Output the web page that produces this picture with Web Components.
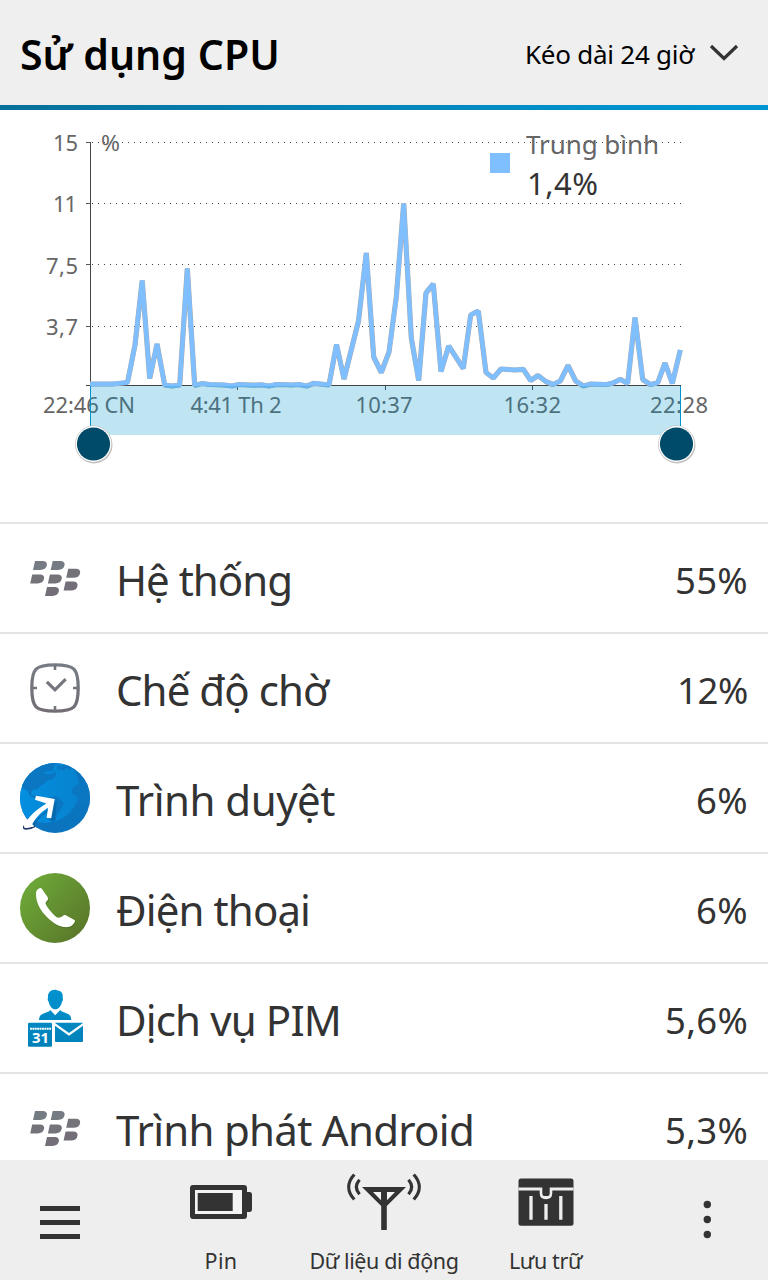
<!DOCTYPE html>
<html lang="vi">
<head>
<meta charset="utf-8">
<title>Sử dụng CPU</title>
<style>
    body {
        margin: 0;
        background: #fff;
        font-family: "Noto Sans", "Open Sans", sans-serif;
        color: #333;
    }
</style>
</head>
<body>
<cpu-app>
    <cpu-header slot="header" heading="Sử dụng CPU" heading-width="260">
        <fit-text width="169">Kéo dài 24 giờ</fit-text>
    </cpu-header>
    <cpu-chart slot="chart"></cpu-chart>
    <usage-row icon="berry" value="55%" value-width="73"><fit-text width="176">Hệ thống</fit-text></usage-row>
    <usage-row icon="clock" value="12%" value-width="71"><fit-text width="212">Chế độ chờ</fit-text></usage-row>
    <usage-row icon="globe" value="6%" value-width="52"><fit-text width="219">Trình duyệt</fit-text></usage-row>
    <usage-row icon="phone" value="6%" value-width="52"><fit-text width="194">Điện thoại</fit-text></usage-row>
    <usage-row icon="pim" value="5,6%" value-width="83"><fit-text width="225">Dịch vụ PIM</fit-text></usage-row>
    <usage-row icon="berry" value="5,3%" value-width="83"><fit-text width="358">Trình phát Android</fit-text></usage-row>
    <action-bar slot="bar">
        <action-tab icon="battery"><fit-text width="33">Pin</fit-text></action-tab>
        <action-tab icon="antenna"><fit-text width="149">Dữ liệu di động</fit-text></action-tab>
        <action-tab icon="chest"><fit-text width="73">Lưu trữ</fit-text></action-tab>
    </action-bar>
</cpu-app>

<script>
const BERRIES = [[13, 18], [30.7, 18], [10.2, 31.4], [27.9, 31.4], [46.2, 25.8], [43.6, 38.6], [25, 44]];
const HANDSET = 'M19.500 15.200C16.800 16.500 16 18 16 21c0 8 3.600 15 9 21s11.500 10.700 18.300 12c4 .4 7.200-.1 9.200-2l2.200-2.800c.6-1 .3-1.900-.7-2.500l-7.800-4.300c-1.400-.7-2.300-.4-3.500.6-1.800 1.300-4.300 2.200-6 1.200-4-3-9-9-11-13.200-.6-1.500.8-2.500 1.600-3.500.9-1.200.9-2.200.3-3.500L22 16c-.6-1-1.500-1.300-2.500-.8z';

const ICONS = {
    berry: `
    <svg width="70" height="70" viewBox="0 0 70 70">
        ${BERRIES.map(([x, y]) => `
        <path transform="translate(${x} ${y})" fill="${y < 25 ? '#757b82' : y < 35 ? '#747379' : '#736e77'}"
            d="M2 0h7.200c3.200 0 5.200 1.500 4.700 4.100C13.300 7.400 10.900 9 7.400 9H0z"/>`).join('')}
    </svg>`,
    clock: `
    <svg width="70" height="70" viewBox="0 0 70 70" fill="none" stroke="url(#g)" stroke-width="3.300">
        <defs>
            <linearGradient id="g" gradientUnits="userSpaceOnUse" x1="0" y1="10" x2="0" y2="60">
                <stop offset="0" stop-color="#757d84"/><stop offset="1" stop-color="#736c75"/>
            </linearGradient>
        </defs>
        <path d="M35 11.900C54.500 11.900 58.200 15.500 58.200 35S54.500 58.100 35 58.100 11.800 54.500 11.800 35 15.500 11.900 35 11.900z"/>
        <path d="M35 12v5M35 53v5M12 35h5M53 35h5" stroke="#74747b" stroke-width="2.600"/>
        <path d="M26.800 28.800L35 36.800 45.700 26.200" stroke-width="3.200"/>
    </svg>`,
    globe: `
    <svg width="70" height="70" viewBox="0 0 70 70">
        <defs>
            <linearGradient id="sea" x1="0" y1=".5" x2="1" y2=".5">
                <stop offset="0" stop-color="#0391e3"/><stop offset="1" stop-color="#0783ce"/>
            </linearGradient>
            <clipPath id="c"><circle cx="35" cy="35" r="35"/></clipPath>
        </defs>
        <g clip-path="url(#c)">
            <rect width="70" height="70" fill="#0b74be"/>
            <circle cx="25" cy="25.500" r="34.500" fill="url(#sea)"/>
            <g fill="#0b76c1">
                <path d="M4 12C12 3 22-1 35-1h1l-2 5-1 4-3 0-6 1 1 2 7 0 3-3 1 4-3 4-5 1-4 4-4 2-2 3-6 1-1 5 5 1 3-1 1 3 5 1-2 2-6-2-7-3-3-6-4-1-2-5z"/>
                <path d="M37 3l2-1 2 2 3-3 7 3-1 4-3-3-4 3-3-2-2 2z"/>
                <path d="M30 34l6-1 5 4 3 3-3 6-4 6-2 6-4 1-1-8-2-5z"/>
                <path d="M70 20l-11 0-2 2-4 2-1 5 3 4 2 0 2 5 11 4z"/>
            </g>
            <path d="M37 38l-2 20-6-1 1-9C22 51 17 58 13 65l-4-2z" fill="#0467aa" opacity=".8"/>
        </g>
        <path d="M4.500 62.500c-1.500 2.500-.8 3.500 1.600 3.300 3.500-.2 6.500-1.200 9-2.600" fill="none" stroke="#23376b" stroke-width="1.700"/>
        <path d="M3.500 62.500C8 54.500 16.500 46 26.500 40.500L15 36.700l1-4L34.700 36 31.200 55.300l-4.600-.5 1.500-10C20.500 49 15.500 55.500 12.200 61.200l2 2.200L5 65z" fill="#fff"/>
    </svg>`,
    phone: `
    <svg width="70" height="70" viewBox="0 0 70 70">
        <defs>
            <linearGradient id="g" x1=".1" y1=".2" x2=".85" y2=".85">
                <stop offset="0" stop-color="#6ca637"/><stop offset="1" stop-color="#5b7a2b"/>
            </linearGradient>
        </defs>
        <circle cx="35" cy="35" r="35" fill="url(#g)"/>
        <path transform="translate(.8 1.200)" fill="#456a20" opacity=".6" d="${HANDSET}"/>
        <path fill="#fff" d="${HANDSET}"/>
    </svg>`,
    pim: `
    <svg width="70" height="70" viewBox="0 0 70 70">
        <defs>
            <linearGradient id="g" gradientUnits="userSpaceOnUse" x1="0" y1="7" x2="0" y2="64">
                <stop offset="0" stop-color="#0092cf"/><stop offset="1" stop-color="#0381b8"/>
            </linearGradient>
        </defs>
        <g fill="url(#g)">
            <path d="M28 15c-.6-5 2.400-8.200 7-8.200 1.300 0 1.700.5 2.700.6 3.700.3 5.600 3 5 7.600.7 1.500.2 2.900-.7 3.700-.7 3.900-3.400 7.600-6.700 7.600s-6-3.700-6.600-7.600c-.9-.8-1.400-2.200-.7-3.700z"/>
            <path d="M19 37c.3-4 1.500-5.200 4-6.200l6.200-2.600 1-1.200 5 5.200 5-5.200 1.200 1.200 6.100 2.600c2.500 1 3.500 2.200 3.800 6.200z"/>
            <rect x="8" y="39.700" width="24" height="24" rx="1.300"/>
            <path d="M35 39.700h28v.3l-14 9.900-14-9.900z"/>
            <path d="M35 42.800l14 10 14-10V58a1 1 0 0 1-1 1H36a1 1 0 0 1-1-1z"/>
        </g>
        <path d="M10 45.700h21" stroke="#fff" stroke-width="2" stroke-dasharray="1.900 .5"/>
        <text x="12" y="60" font-size="14.500" font-weight="700" fill="#fff" textLength="17" lengthAdjust="spacingAndGlyphs">31</text>
    </svg>`,
    battery: `
    <svg width="76" height="60" viewBox="0 0 76 60">
        <rect x="7" y="15" width="57" height="34" rx="3" fill="#333"/>
        <rect x="12" y="20" width="47" height="24" fill="#f4f4f4"/>
        <rect x="14.700" y="23" width="35" height="18" fill="#333"/>
        <path d="M64 22h2.500q2.500 0 2.500 3v14q0 3-2.500 3H64z" fill="#333"/>
    </svg>`,
    antenna: `
    <svg width="76" height="60" viewBox="0 0 76 60" fill="none" stroke="#333">
        <path d="M16 17h44L40.800 36v24h-5.600V36z" fill="#333" stroke="none"/>
        <path d="M27 22h8v8.200zM41 22h8l-8 8.200z" fill="#f4f4f4" stroke="none"/>
        <path d="M8.300 4.500C.9 12.500.9 21.500 8.300 29.500M13.500 9.700c-4 4.600-4 10 0 14.600M67.700 4.500c7.400 8 7.400 17 0 25M62.500 9.700c4 4.600 4 10 0 14.600" stroke-width="3.200"/>
    </svg>`,
    chest: `
    <svg width="76" height="60" viewBox="0 0 76 60">
        <rect x="10.500" y="8.500" width="55" height="47.300" rx="2.500" fill="#333"/>
        <path d="M10.500 19h55" stroke="#eee" stroke-width="2.800"/>
        <path d="M31.700 18.500v4.500q0 6.200 6.300 6.200t6.300-6.200v-4.500z" fill="#eee"/>
        <path d="M34.300 17v6.500q0 2.500 2 2.500h3.400q2 0 2-2.500V17z" fill="#333"/>
        <path d="M23 26v23.700M38 34v15.700M52.800 26v23.700" stroke="#eee" stroke-width="3.300"/>
    </svg>`
};

// Spreads its text over a fixed advance width
class FitText extends HTMLElement {
    constructor() {
        super();
        this.attachShadow({ mode: 'open' });
        this.shadowRoot.innerHTML = `
        <style>
            :host { display: inline-block; white-space: nowrap; }
        </style>
        <slot></slot>
        `;
    }

    fit() {
        this.style.letterSpacing = '0';
        const natural = this.getBoundingClientRect().width;
        const gap = (Number(this.getAttribute('width')) - natural) / this.textContent.length;
        this.style.letterSpacing = gap.toFixed(3) + 'px';
    }
}
customElements.define('fit-text', FitText);

class CpuApp extends HTMLElement {
    constructor() {
        super();
        this.attachShadow({ mode: 'open' });
    }

    connectedCallback() {
        this.shadowRoot.innerHTML = `
        <style>
            :host {
                display: flex;
                flex-direction: column;
                width: 768px;
                height: 1280px;
                overflow: hidden;
            }
            .list {
                flex: 1;
                min-height: 0;
                overflow: hidden;
            }
        </style>
        <slot name="header"></slot>
        <slot name="chart"></slot>
        <div class="list"><slot></slot></div>
        <slot name="bar"></slot>
        `;
    }
}
customElements.define('cpu-app', CpuApp);

class CpuHeader extends HTMLElement {
    constructor() {
        super();
        this.attachShadow({ mode: 'open' });
    }

    connectedCallback() {
        this.shadowRoot.innerHTML = `
        <style>
            :host {
                display: block;
                flex: none;
                height: 110px;
                color: #000;
                background: #efefef;
            }
            .line {
                height: 105px;
                display: flex;
                align-items: center;
                justify-content: space-between;
                padding: 0 29px 0 20px;
                box-sizing: border-box;
            }
            h1 {
                margin: 3px 0 0;
                font-size: 41px;
                font-weight: 600;
            }
            .range {
                display: flex;
                align-items: center;
                gap: 15px;
                font-size: 26px;
                margin-top: 2px;
            }
            .range svg { margin-top: -2px; }
            .rule {
                height: 5px;
                background: linear-gradient(90deg, #08709a, #0092cc 80%, #0096d2);
            }
        </style>
        <div class="line">
            <h1><fit-text width="${this.getAttribute('heading-width')}">${this.getAttribute('heading')}</fit-text></h1>
            <div class="range">
                <slot></slot>
                <svg width="30" height="20" viewBox="0 0 30 20"><path d="M2 3l13 12.500L28 3" fill="none" stroke="#333" stroke-width="3.200"/></svg>
            </div>
        </div>
        <div class="rule"></div>
        `;
    }
}
customElements.define('cpu-header', CpuHeader);

class CpuChart extends HTMLElement {
    constructor() {
        super();
        this.attachShadow({ mode: 'open' });
    }

    connectedCallback() {
        const points = [
            [90, 384], [113, 384], [127.5, 382.5], [135, 345], [142.2, 280.5], [149.7, 378.5], [157, 344],
            [164.7, 385], [172, 386], [179.7, 385], [187.3, 268.5], [194.7, 385.5], [202, 383.5], [209.5, 384.5],
            [224, 385], [232, 386], [239, 384.5], [254, 385.2], [261.5, 384.8], [269, 386], [276.5, 384.5],
            [284, 384.6], [291.5, 385], [299, 384.5], [306.7, 386], [314, 383.3], [329, 385], [336.5, 344.5],
            [344, 379], [358.5, 321], [366.3, 253], [373.7, 357], [381.3, 372.5], [389, 352], [396.3, 297],
            [403.7, 203.5], [411.3, 338], [418.7, 380.5], [426, 293], [433.3, 284], [441, 371.5], [448.7, 346],
            [463.3, 368.5], [470.7, 315], [478.3, 311], [486, 372.5], [493.3, 378], [501, 369], [515, 370],
            [523.3, 369.3], [530.7, 380.5], [538, 375.5], [545.7, 381.5], [553, 384.5], [560.3, 381], [568, 365.5],
            [575.7, 381], [583.3, 386], [590.7, 384], [606.7, 384.5], [613, 383], [620.3, 379.3], [627.7, 383.5],
            [635, 317.5], [642.7, 379.5], [650.3, 384.5], [657.7, 382.8], [665, 363], [672.3, 383.5], [680.3, 350]
        ].map(p => p.join(',')).join(' ');

        const grid = [142.5, 203.5, 264.5, 326.5];
        const yLabels = [['15', 53, 151, 25], ['11', 53, 212, 24], ['7,5', 46, 274, 32], ['3,7', 46, 335, 32]];
        const xLabels = [['22:46 CN', 43, 92], ['4:41 Th 2', 190.5, 91], ['10:37', 355.5, 57], ['16:32', 503.5, 57.5], ['22:28', 650, 58]];

        this.shadowRoot.innerHTML = `
        <style>
            :host {
                display: block;
                flex: none;
                height: 412px;
            }
            svg { display: block; }
            text { font-size: 22px; fill: #666; }
        </style>
        <svg width="768" height="412" viewBox="0 110 768 412">
            ${grid.map(y => `<path d="M92 ${y}H682" stroke="#444" stroke-dasharray="1 5"/><path d="M86 ${y}h4" stroke="#555"/>`).join('')}
            <path d="M90.500 142v244M86 385.500h595M237.500 386v4M385.500 386v4M532.500 386v4" stroke="#444" fill="none"/>
            ${yLabels.map(([t, x, y, w]) => `<text x="${x}" y="${y}" textLength="${w}">${t}</text>`).join('')}
            <text x="101" y="151" textLength="19" lengthAdjust="spacingAndGlyphs">%</text>
            ${xLabels.map(([t, x, w]) => `<text x="${x}" y="413" textLength="${w}">${t}</text>`).join('')}

            <rect x="490" y="153" width="20" height="20" fill="#80bfff"/>
            <text x="526" y="154" style="font-size: 26px" textLength="133">Trung bình</text>
            <text x="527" y="195" style="font-size: 31px; fill: #333" textLength="71">1,4%</text>

            <g fill="none" stroke-linejoin="bevel">
                <polyline points="${points}" stroke="#aaa" stroke-width="5.200"/>
                <polyline points="${points}" stroke="#80bfff" stroke-width="4.400"/>
            </g>

            <rect x="90" y="386" width="591" height="49" fill="#0092cc" opacity=".25"/>
            <path d="M90.500 386v42M680.500 386v42" stroke="#0092cc"/>
            ${[93.5, 676.5].map(x => `
            <circle cx="${x + .5}" cy="445" r="18.500" fill="#888" opacity=".5"/>
            <circle cx="${x}" cy="444" r="18.400" fill="#bbb"/>
            <circle cx="${x}" cy="444" r="17.900" fill="#fff"/>
            <circle cx="${x}" cy="444" r="16.600" fill="#004b69"/>`).join('')}
        </svg>
        `;
    }
}
customElements.define('cpu-chart', CpuChart);

class UsageRow extends HTMLElement {
    constructor() {
        super();
        this.attachShadow({ mode: 'open' });
    }

    connectedCallback() {
        this.shadowRoot.innerHTML = `
        <style>
            :host {
                display: flex;
                align-items: center;
                box-sizing: border-box;
                height: 110px;
                padding: 0 20px;
                border-top: 2px solid #e4e4e4;
                font-size: 42px;
            }
            svg { display: block; }
            .name { flex: 1; margin-left: 26px; padding-top: 2px; }
            .value { font-size: 36.5px; padding-top: 4px; }
        </style>
        ${ICONS[this.getAttribute('icon')]}
        <div class="name"><slot></slot></div>
        <div class="value"><fit-text width="${this.getAttribute('value-width')}">${this.getAttribute('value')}</fit-text></div>
        `;
    }
}
customElements.define('usage-row', UsageRow);

class ActionTab extends HTMLElement {
    constructor() {
        super();
        this.attachShadow({ mode: 'open' });
    }

    connectedCallback() {
        this.shadowRoot.innerHTML = `
        <style>
            :host {
                display: flex;
                flex-direction: column;
                align-items: center;
                padding-top: 10px;
                font-size: 21.5px;
            }
            svg { display: block; }
            .label { line-height: 30px; margin-top: 16px; }
        </style>
        ${ICONS[this.getAttribute('icon')]}
        <div class="label"><slot></slot></div>
        `;
    }
}
customElements.define('action-tab', ActionTab);

class ActionBar extends HTMLElement {
    constructor() {
        super();
        this.attachShadow({ mode: 'open' });
    }

    connectedCallback() {
        this.shadowRoot.innerHTML = `
        <style>
            :host {
                display: grid;
                grid-template-columns: 139px 164px 162px 161px 1fr;
                flex: none;
                height: 120px;
                background: #eee;
            }
            .menu { margin: 46px 0 0 40px; }
            .more { margin: 40px 0 0 76px; }
        </style>
        <svg class="menu" width="40" height="33" fill="#333">
            <rect width="40" height="5"/><rect y="14" width="40" height="5"/><rect y="28" width="40" height="5"/>
        </svg>
        <slot></slot>
        <svg class="more" width="10" height="40" fill="#333">
            <circle cx="5.300" cy="4.500" r="3.700"/><circle cx="5.300" cy="19.500" r="3.700"/><circle cx="5.300" cy="34.500" r="3.700"/>
        </svg>
        `;
    }
}
customElements.define('action-bar', ActionBar);

// Everything is upgraded and laid out by now, in and out of the shadow roots
document.querySelectorAll('fit-text').forEach(el => el.fit());
document.querySelectorAll('cpu-header, usage-row').forEach(el => {
    el.shadowRoot.querySelectorAll('fit-text').forEach(t => t.fit());
});
</script>
</body>
</html>
